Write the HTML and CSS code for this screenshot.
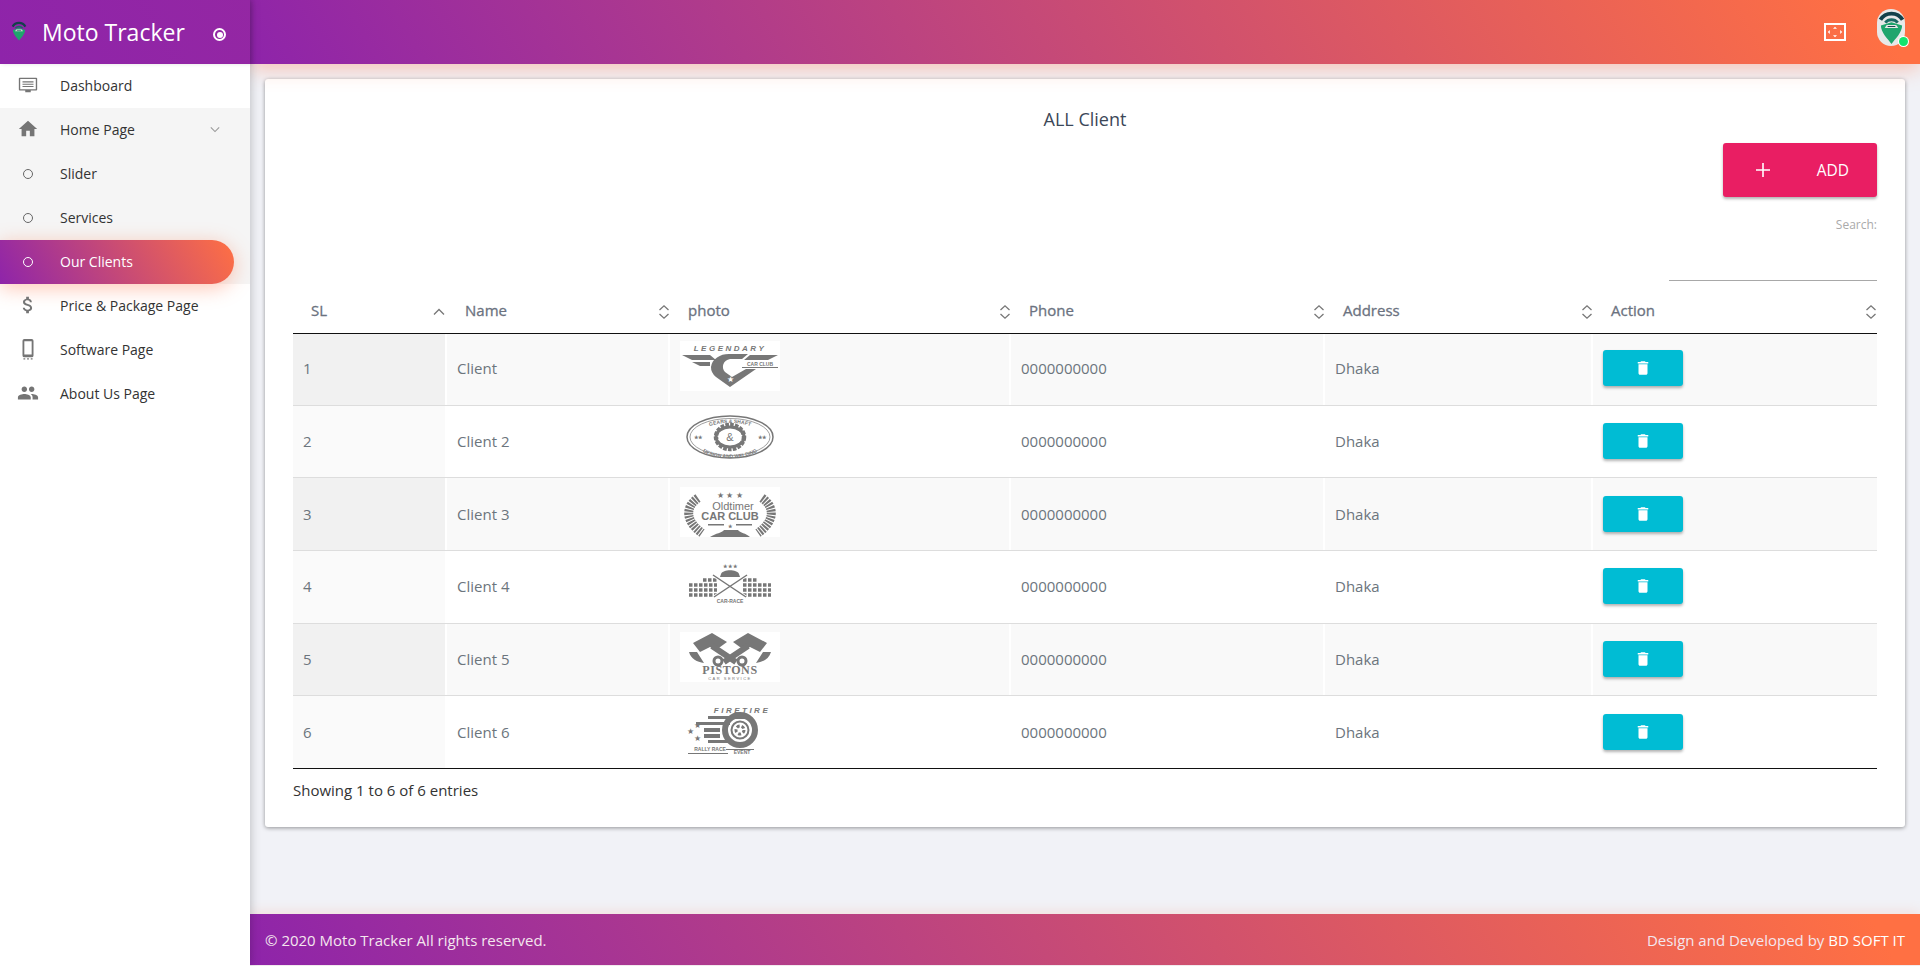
FILE: index.html
```html
<!DOCTYPE html>
<html>
<head>
    <title>Moto Tracker</title>
    <meta charset="UTF-8">
    <link rel="stylesheet" href="styles.css">
</head>
<body>
<svg class="defs" width="0" height="0">
    <symbol id="sort" viewBox="0 0 12 16"><path d="M1.500 6 6 1.800 10.500 6M1.500 10 6 14.200 10.500 10" fill="none" stroke="currentColor" stroke-width="1.300"/></symbol>
    <symbol id="trash" viewBox="0 0 24 24"><path d="M6 19c0 1.100.9 2 2 2h8c1.100 0 2-.9 2-2V7H6v12zM19 4h-3.500l-1-1h-5l-1 1H5v2h14V4z"/></symbol>
    <symbol id="pin" viewBox="0 0 28 36">
        <path d="M2.500 10A13.500 13.500 0 0 1 25.500 10" fill="none" stroke="#12404a" stroke-width="4"/>
        <path d="M7.500 13A8.500 8.500 0 0 1 20.500 13" fill="none" stroke="#1b6a64" stroke-width="3"/>
        <path d="M3 16 14 12.500 25 16C25 23 18 30 14 35 10 30 3 23 3 16z" fill="#1fa56d"/>
        <path d="M9 15.500h10l2 3H7z" fill="#e8e8e8"/>
        <path d="M10 16.500h8v1h-8z" fill="#12404a"/>
    </symbol>
</svg>
<div class="app">
    <aside class="sidebar">
        <div class="brand">
            <svg class="brand-logo"><use href="#pin"/></svg>
            <span class="brand-name">Moto Tracker</span>
            <span class="brand-toggle"></span>
        </div>
        <ul class="menu">
            <li><svg class="menu-icon" viewBox="0 0 24 24"><path d="M3 4h18a1 1 0 0 1 1 1v12a1 1 0 0 1-1 1h-6v2H9v-2H3a1 1 0 0 1-1-1V5a1 1 0 0 1 1-1zm.500 1.500v11h17v-11z M6 8h12v1.300H6zM6 10.500h12v1.300H6zM6 13h12v1.300H6z" fill-rule="evenodd"/></svg><span>Dashboard</span></li>
            <li class="open"><svg class="menu-icon" viewBox="0 0 24 24"><path d="M10 20v-6h4v6h5v-8h3L12 3 2 12h3v8z"/></svg><span>Home Page</span>
                <svg class="chev" viewBox="0 0 12 8"><path d="M1 1.500 6 6.500 11 1.500" fill="none" stroke="currentColor" stroke-width="1.300"/></svg></li>
            <li class="open"><i class="dot"></i><span>Slider</span></li>
            <li class="open"><i class="dot"></i><span>Services</span></li>
            <li class="open active"><i class="dot"></i><span>Our Clients</span></li>
            <li><svg class="menu-icon" viewBox="0 0 24 24"><path d="M11.800 10.900c-2.270-.59-3-1.200-3-2.150 0-1.090 1.010-1.850 2.700-1.850 1.780 0 2.440.85 2.500 2.100h2.210c-.07-1.720-1.120-3.300-3.210-3.810V3h-3v2.160c-1.940.42-3.500 1.680-3.500 3.610 0 2.310 1.910 3.460 4.700 4.130 2.500.6 3 1.480 3 2.410 0 .69-.49 1.790-2.700 1.790-2.060 0-2.870-.92-2.980-2.100h-2.200c.12 2.190 1.760 3.420 3.680 3.830V21h3v-2.150c1.950-.37 3.500-1.500 3.500-3.550 0-2.840-2.430-3.810-4.700-4.400z"/></svg><span>Price &amp; Package Page</span></li>
            <li><svg class="menu-icon" viewBox="0 0 24 24"><path d="M8 1h8a2 2 0 0 1 2 2v16a2 2 0 0 1-2 2H8a2 2 0 0 1-2-2V3a2 2 0 0 1 2-2zm0 2.500V18h8V3.500zM7 22.200h2v1.300H7zM11 22.200h2v1.300h-2zM15 22.200h2v1.300h-2z" fill-rule="evenodd"/></svg><span>Software Page</span></li>
            <li><svg class="menu-icon" viewBox="0 0 24 24"><path d="M16 11c1.660 0 2.990-1.340 2.990-3S17.660 5 16 5c-1.660 0-3 1.340-3 3s1.340 3 3 3zm-8 0c1.660 0 2.990-1.340 2.990-3S9.660 5 8 5C6.340 5 5 6.340 5 8s1.340 3 3 3zm0 2c-2.330 0-7 1.170-7 3.500V19h14v-2.500c0-2.330-4.670-3.500-7-3.500zm8 0c-.29 0-.62.02-.97.05 1.160.84 1.970 1.970 1.970 3.450V19h6v-2.500c0-2.330-4.670-3.500-7-3.500z"/></svg><span>About Us Page</span></li>
        </ul>
    </aside>
    <div class="main">
        <header class="topbar">
            <svg class="fullscreen" viewBox="0 0 22 18"><path d="M1 1h20v16H1z" fill="none" stroke="#fff" stroke-width="2"/><path d="M11 3.800 13 5.800H9zM11 14.200 13 12.200H9zM3.800 9 5.800 7V11zM18.200 9 16.200 7V11z" fill="#fff"/></svg>
            <div class="avatar">
                <svg class="avatar-pin"><use href="#pin"/></svg>
                <span class="online"></span>
            </div>
        </header>
        <main class="content">
            <section class="card">
                <h4 class="card-title">ALL Client</h4>
                <div class="toolbar">
                    <button class="btn-add"><svg class="plus" viewBox="0 0 14 14"><path d="M6.200 0h1.600v6.200H14v1.600H7.800V14H6.200V7.800H0V6.200h6.200z"/></svg><span>ADD</span></button>
                </div>
                <div class="search">
                    <label>Search:</label>
                    <input type="text" class="search-input">
                </div>
                <div class="table-wrap">
                <table class="clients">
                    <colgroup>
                        <col class="c-sl"><col class="c-name"><col class="c-photo"><col class="c-phone"><col class="c-addr"><col class="c-action">
                    </colgroup>
                    <thead>
                        <tr>
                            <th>SL<svg class="sort up" viewBox="0 0 12 8"><path d="M1 6.500 6 1.500 11 6.500" fill="none" stroke="currentColor" stroke-width="1.300"/></svg></th>
                            <th>Name<svg class="sort"><use href="#sort"/></svg></th>
                            <th>photo<svg class="sort"><use href="#sort"/></svg></th>
                            <th>Phone<svg class="sort"><use href="#sort"/></svg></th>
                            <th>Address<svg class="sort"><use href="#sort"/></svg></th>
                            <th>Action<svg class="sort"><use href="#sort"/></svg></th>
                        </tr>
                    </thead>
                    <tbody>
                        <tr>
                            <td>1</td><td>Client</td>
                            <td><svg class="logo" viewBox="0 0 100 50">
                                <text x="50" y="10" class="t-wide" text-anchor="middle">LEGENDARY</text>
                                <path d="M2 14H30L36 19H12zM98 14H70L64 19H88zM12 21H30V25H20zM62 26H98V27H62z"/>
                                <path d="M31 26A18 14 0 0 1 50 13H68L62 18H50A9 8 0 0 0 45 31L52 36 66 28H76L50 46 36 36A18 14 0 0 1 31 26z"/>
                                <path d="M62 20H98V25H62z" fill="#fff"/>
                                <text x="80" y="25" class="t-small" text-anchor="middle">CAR CLUB</text>
                                <text x="50" y="41" class="t-star" text-anchor="middle" fill="#fff">★</text>
                            </svg></td>
                            <td>0000000000</td><td>Dhaka</td><td><button class="btn-del"><svg><use href="#trash"/></svg></button></td>
                        </tr>
                        <tr>
                            <td>2</td><td>Client 2</td>
                            <td><svg class="logo" viewBox="0 0 100 50">
                                <defs>
                                    <path id="arc-top" d="M16 25A34 16 0 0 1 84 25"/>
                                    <path id="arc-bot" d="M13 25A37 19 0 0 0 87 25"/>
                                </defs>
                                <ellipse cx="50" cy="23" rx="43" ry="21" fill="none" stroke="#777" stroke-width="1.500"/>
                                <ellipse cx="50" cy="23" rx="40" ry="18.500" fill="none" stroke="#777" stroke-width=".7"/>
                                <ellipse cx="50" cy="23" rx="14" ry="12" fill="none" stroke="#777" stroke-width="4.500" stroke-dasharray="3.500 1.200"/>
                                <ellipse cx="50" cy="23" rx="14" ry="10" fill="none" stroke="#777" stroke-width="3"/>
                                <text class="t-small"><textPath href="#arc-top" startOffset="50%" text-anchor="middle">GEARS &amp; SHAFT</textPath></text>
                                <text class="t-small"><textPath href="#arc-bot" startOffset="50%" text-anchor="middle">DESIGN AND WELDING</textPath></text>
                                <text x="50" y="27" class="t-amp" text-anchor="middle">&amp;</text>
                                <text x="18" y="25" class="t-small" text-anchor="middle">★★</text>
                                <text x="82" y="25" class="t-small" text-anchor="middle">★★</text>
                            </svg></td>
                            <td>0000000000</td><td>Dhaka</td><td><button class="btn-del"><svg><use href="#trash"/></svg></button></td>
                        </tr>
                        <tr>
                            <td>3</td><td>Client 3</td>
                            <td><svg class="logo" viewBox="0 0 100 50">
                                <text x="50" y="11" class="t-star" text-anchor="middle">★ ★ ★</text>
                                <path d="M18 11C5 20 5 34 22 46M82 11C95 20 95 34 78 46" fill="none" stroke="#777" stroke-width="9" stroke-dasharray="2 1"/>
                                <text x="53" y="23" class="t-old" text-anchor="middle">Oldtimer</text>
                                <text x="50" y="33" class="t-club" text-anchor="middle">CAR CLUB</text>
                                <path d="M28 37H44V38.500H28zM56 37H72V38.500H56zM30 50C36 46 42 46 44 43H58C60 46 66 46 70 50z"/>
                                <text x="50" y="41" class="t-small" text-anchor="middle">★</text>
                            </svg></td>
                            <td>0000000000</td><td>Dhaka</td><td><button class="btn-del"><svg><use href="#trash"/></svg></button></td>
                        </tr>
                        <tr>
                            <td>4</td><td>Client 4</td>
                            <td><svg class="logo" viewBox="0 0 100 50">
                                <text x="50" y="9" class="t-small" text-anchor="middle">★ ★ ★</text>
                                <path d="M41 15C43 10 57 10 59 15L60 18H40z"/>
                                <path d="M9 26H37M9 31H37M9 36H37M23 21H37M63 21H77M63 26H91M63 31H91M63 36H91" stroke="#777" stroke-width="3.500" stroke-dasharray="3.500 1.500" fill="none"/>
                                <path d="M33 16 66 38M67 16 34 38" stroke="#fff" stroke-width="3"/>
                                <path d="M33 16 66 38M67 16 34 38" stroke="#777" stroke-width="1.500"/>
                                <text x="50" y="44" class="t-small" text-anchor="middle">CAR-RACE</text>
                            </svg></td>
                            <td>0000000000</td><td>Dhaka</td><td><button class="btn-del"><svg><use href="#trash"/></svg></button></td>
                        </tr>
                        <tr>
                            <td>5</td><td>Client 5</td>
                            <td><svg class="logo" viewBox="0 0 100 50">
                                <path d="M13 11 32 1 47 10 36 18 30 15 20 20zM87 11 68 1 53 10 64 18 70 15 80 20z"/>
                                <path d="M32 14 56 30M68 14 44 30" stroke="#777" stroke-width="6"/>
                                <circle cx="38" cy="29" r="4" fill="none" stroke="#777" stroke-width="3"/>
                                <circle cx="62" cy="29" r="4" fill="none" stroke="#777" stroke-width="3"/>
                                <path d="M9 20C11 27 17 30 24 31L17 20zM91 20C89 27 83 30 76 31L83 20z"/>
                                <text x="50" y="42" class="t-pistons" text-anchor="middle">PISTONS</text>
                                <text x="50" y="48" class="t-tiny" text-anchor="middle">CAR SERVICE</text>
                            </svg></td>
                            <td>0000000000</td><td>Dhaka</td><td><button class="btn-del"><svg><use href="#trash"/></svg></button></td>
                        </tr>
                        <tr>
                            <td>6</td><td>Client 6</td>
                            <td><svg class="logo" viewBox="0 0 100 50">
                                <text x="62" y="8" class="t-wide" text-anchor="middle">FIRETIRE</text>
                                <path d="M28 11H66V14H28zM16 17H50V20H16zM24 23H40V27H24zM24 29H40V33H24zM28 35H50V38H28z"/>
                                <circle cx="60" cy="25" r="15" fill="none" stroke="#777" stroke-width="6"/>
                                <circle cx="60" cy="25" r="8.500" fill="none" stroke="#777" stroke-width="2"/>
                                <circle cx="60" cy="25" r="4" fill="none" stroke="#777" stroke-width="3" stroke-dasharray="3 2"/>
                                <text x="10" y="29" class="t-star" text-anchor="middle">★</text>
                                <text x="17" y="23" class="t-star" text-anchor="middle">★</text>
                                <text x="17" y="36" class="t-star" text-anchor="middle">★</text>
                                <text x="30" y="46" class="t-small" text-anchor="middle">RALLY RACE</text>
                                <text x="62" y="49" class="t-small" text-anchor="middle">EVENT</text>
                                <path d="M46 44H74V45H46zM8 48H48V49H8z"/>
                            </svg></td>
                            <td>0000000000</td><td>Dhaka</td><td><button class="btn-del"><svg><use href="#trash"/></svg></button></td>
                        </tr>
                    </tbody>
                </table>
                </div>
                <div class="info">Showing 1 to 6 of 6 entries</div>
            </section>
        </main>
        <footer class="foot">
            <span>© 2020 Moto Tracker All rights reserved.</span>
            <span>Design and Developed by <span class="foot-co">BD SOFT IT</span></span>
        </footer>
    </div>
</div>
</body>
</html>
```

FILE: styles.css
```css
* {
    box-sizing: border-box;
}
html, body {
    height: 100%;
}
body {
    margin: 0;
    background: #f1f2f7;
    font-family: "Open Sans", sans-serif;
    font-size: 14px;
    color: #3c4858;
    overflow: hidden;
}
.defs {
    position: absolute;
}
.app {
    display: flex;
    height: 966px;
}

/* sidebar */
.sidebar {
    width: 250px;
    flex-shrink: 0;
    background: #fff;
    box-shadow: 0 0 10px rgba(0, 0, 0, .25);
    position: relative;
    z-index: 3;
}
.brand {
    height: 64px;
    display: flex;
    align-items: center;
    background: linear-gradient(60deg, #8e24aa, #a62f8e 400%);
    color: #fff;
    box-shadow: 2px 0 4px rgba(0, 0, 0, .12);
}
.brand-logo {
    width: 16px;
    height: 20px;
    margin-left: 11px;
    margin-top: -3px;
}
.brand-name {
    margin-left: 15px;
    font-size: 23px;
    font-weight: 400;
    width: 170px;
}
.brand-toggle {
    width: 13px;
    height: 13px;
    border: 2px solid #fff;
    border-radius: 50%;
    position: relative;
    margin-top: 5px;
    margin-left: 1px;
}
.brand-toggle::after {
    content: "";
    position: absolute;
    inset: 1.500px;
    border-radius: 50%;
    background: #fff;
}
.menu {
    list-style: none;
    margin: 0;
    padding: 0;
}
.menu li {
    height: 44px;
    display: flex;
    align-items: center;
    padding: 0 0 2px 60px;
    position: relative;
    color: #333;
    font-size: 14px;
}
.menu li.open {
    background: #f5f5f5;
}
.menu-icon {
    position: absolute;
    left: 17px;
    width: 22px;
    height: 22px;
    fill: #757575;
}
.dot {
    position: absolute;
    left: 23px;
    top: 17px;
    width: 10px;
    height: 10px;
    border: 1px solid #666;
    border-radius: 50%;
}
.chev {
    position: absolute;
    left: 210px;
    width: 10px;
    height: 7px;
    color: #999;
}
.menu li.active {
    color: #fff;
}
.menu li.active::before {
    content: "";
    position: absolute;
    left: 0;
    top: 0;
    width: 234px;
    height: 44px;
    border-radius: 0 22px 22px 0;
    background: linear-gradient(60deg, #8e24aa, #ff7043);
    box-shadow: 0 4px 20px rgba(255, 112, 67, .4);
}
.menu li.active span {
    position: relative;
}
.menu li.active .dot {
    border-color: #fff;
    border-width: 1.500px;
}

/* top bar */
.main {
    flex: 1;
    min-width: 0;
    display: flex;
    flex-direction: column;
}
.topbar {
    height: 64px;
    flex-shrink: 0;
    display: flex;
    align-items: center;
    justify-content: flex-end;
    padding-right: 15px;
    background: linear-gradient(60deg, #8e24aa, #ff7043 97%);
    box-shadow: 0 4px 20px rgba(255, 112, 67, .4);
    position: relative;
    z-index: 2;
}
.fullscreen {
    width: 22px;
    height: 18px;
    margin-right: 31px;
}
.avatar {
    width: 28px;
    height: 37px;
    margin-top: -10px;
    border-radius: 14px;
    background: #e8e8e8;
    position: relative;
    display: flex;
    justify-content: center;
    padding-top: 1px;
}
.avatar-pin {
    width: 27px;
    height: 35px;
}
.online {
    position: absolute;
    right: -3px;
    bottom: 0;
    width: 9px;
    height: 9px;
    border-radius: 50%;
    background: #14e36d;
    box-shadow: 0 0 0 1px #fff;
}

/* card */
.content {
    flex: 1;
    padding: 15px 15px 0;
}
.card {
    background: #fff;
    height: 748px;
    border-radius: 3px;
    padding: 26px 28px 0;
    box-shadow: 0 1px 4px rgba(0, 0, 0, .4);
}
.card-title {
    margin: 0;
    text-align: center;
    font-size: 18px;
    font-weight: 400;
    line-height: 28px;
    color: #3c4858;
}
.toolbar {
    display: flex;
    justify-content: flex-end;
    margin-top: 10px;
}
.btn-add {
    width: 154px;
    height: 54px;
    border: 0;
    border-radius: 3px;
    background: #e91e63;
    color: #fff;
    display: flex;
    align-items: center;
    padding: 0 28px 0 33px;
    justify-content: space-between;
    font-family: inherit;
    font-size: 15.500px;
    box-shadow: 0 2px 3px rgba(0, 0, 0, .3);
}
.plus {
    width: 14px;
    height: 14px;
    fill: #fff;
}
.search {
    display: flex;
    flex-direction: column;
    align-items: flex-end;
    margin-top: 18px;
}
.search label {
    font-size: 12px;
    line-height: 20px;
    color: #aaa;
}
.search-input {
    width: 208px;
    height: 36px;
    border: 0;
    border-bottom: 1px solid #a8a8a8;
    background: transparent;
    margin-top: 10px;
    outline: 0;
}
.table-wrap {
    margin: 0 -2px;
}

/* table */
.clients {
    width: 100%;
    table-layout: fixed;
    border-collapse: separate;
    border-spacing: 2px 0;
    font-size: 15px;
}
.c-sl { width: 152px; }
.c-name { width: 221px; }
.c-photo { width: 339px; }
.c-phone { width: 312px; }
.c-addr { width: 266px; }
.c-action { width: 284px; }
.clients th {
    position: relative;
    height: 52px;
    padding: 6px 18px 0;
    text-align: left;
    font-weight: 400;
    -webkit-text-stroke: .3px;
    font-size: 15px;
    color: #6b7280;
}
.clients th::after, .clients td::after {
    content: "";
    position: absolute;
    left: -2px;
    right: 0;
    bottom: -1px;
    height: 1px;
    background: #111;
}
.clients th::after {
    z-index: 1;
}
.clients th:first-child::after, .clients td:first-child::after {
    left: 0;
}
.sort {
    position: absolute;
    right: -2px;
    top: 23px;
    width: 12px;
    height: 16px;
    color: #777;
}
.clients th:last-child .sort {
    right: 0;
}
.sort.up {
    top: 27px;
    right: 0;
    width: 12px;
    height: 8px;
}
.clients td {
    position: relative;
    height: 72.670px;
    padding: 0 10px 2px;
    color: #6c757d;
    background: #fff;
}
.clients td::after {
    bottom: 0;
    background: #ddd;
}
.clients tbody tr:last-child td::after {
    background: #111;
}
.clients tbody tr:nth-child(odd) td {
    background: #f9f9f9;
}
.clients tbody td:first-child {
    background: #fafafa;
}
.clients tbody tr:nth-child(odd) td:first-child {
    background: #f1f1f1;
}
.logo {
    display: block;
    width: 100px;
    height: 50px;
    margin-bottom: 4px;
    background: #fff;
    fill: #777;
    font-family: "Liberation Sans", sans-serif;
}
.t-wide {
    font-size: 8px;
    font-weight: 700;
    font-style: italic;
    letter-spacing: 2.500px;
}
.t-small {
    font-size: 5px;
    font-weight: 700;
}
.t-tiny {
    font-size: 4px;
    letter-spacing: 1.500px;
}
.t-amp {
    font-size: 11px;
}
.t-star {
    font-size: 8px;
}
.t-old {
    font-size: 11px;
}
.t-club {
    font-size: 11px;
    font-weight: 700;
}
.t-pistons {
    font-family: "Liberation Serif", serif;
    font-size: 12px;
    font-weight: 700;
    letter-spacing: .6px;
}
.btn-del {
    display: flex;
    align-items: center;
    justify-content: center;
    width: 80px;
    height: 36px;
    border: 0;
    border-radius: 3px;
    background: #00bcd4;
    box-shadow: 0 2px 3px rgba(0, 0, 0, .3);
}
.btn-del svg {
    width: 18px;
    height: 18px;
    fill: #fff;
}
.info {
    margin-top: 11px;
    line-height: 20px;
    font-size: 15px;
    color: #333;
}

/* footer */
.foot {
    height: 51px;
    margin-bottom: 1px;
    flex-shrink: 0;
    display: flex;
    align-items: center;
    justify-content: space-between;
    padding: 0 15px;
    color: #f4e6ee;
    font-size: 15px;
    background: linear-gradient(60deg, #8e24aa, #ff7043 97%);
    box-shadow: 0 -2px 12px rgba(255, 112, 67, .15);
}
.foot-co {
    color: #fff;
}
```
